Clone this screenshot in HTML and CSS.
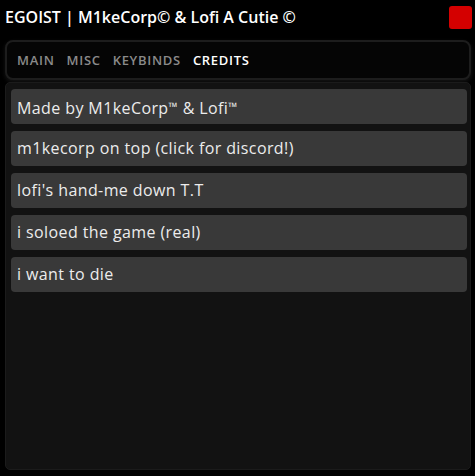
FILE: index.html
```html
<!DOCTYPE html>
<html lang="en">
<head>
    <meta charset="UTF-8">
    <meta name="viewport" content="width=device-width, initial-scale=1.0">
    <title>EGOIST</title>
    <link rel="stylesheet" href="styles.css">
</head>
<body>
    <div class="window">
        <div class="topbar">
            <div class="title">EGOIST | M1keCorp© &amp; Lofi A Cutie ©</div>
            <button class="close-button" aria-label="Close"></button>
        </div>

        <nav class="tabs">
            <span class="tab">MAIN</span>
            <span class="tab">MISC</span>
            <span class="tab">KEYBINDS</span>
            <span class="tab active">CREDITS</span>
        </nav>

        <div class="panel">
            <div class="item">Made by M1keCorp<span class="tm">™</span> &amp; Lofi<span class="tm">™</span></div>
            <div class="item">m1kecorp on top (click for discord!)</div>
            <div class="item">lofi's hand-me down T.T</div>
            <div class="item">i soloed the game (real)</div>
            <div class="item">i want to die</div>
        </div>
    </div>
</body>
</html>
```

FILE: styles.css
```css
body {
    margin: 0;
    background-color: #000;
    color: #fff;
    font-family: 'Open Sans', 'Liberation Sans', sans-serif;
}

.window {
    width: 475px;
    height: 476px;
    display: flex;
    flex-direction: column;
    box-sizing: border-box;
    padding: 0 4px 6px 5px;
}

.topbar {
    height: 34px;
    display: flex;
    align-items: center;
    justify-content: space-between;
}

.title {
    font-size: 16px;
    font-weight: 600;
}

.close-button {
    width: 23px;
    height: 23px;
    margin-right: -1px;
    border: none;
    border-radius: 3px;
    background-color: #d40000;
    padding: 0;
}

.tabs {
    margin-top: 6px;
    height: 36px;
    display: flex;
    align-items: center;
    gap: 12px;
    padding: 0 10px;
    background-color: #050505;
    border: 2px solid #1d1d1d;
    border-radius: 8px;
    box-shadow: 0 2px 4px rgba(60, 60, 60, 0.35);
}

.tab {
    font-size: 13px;
    font-weight: 600;
    color: #8a8a8a;
    letter-spacing: 0.7px;
}

.tab.active {
    color: #fff;
}

.panel {
    flex: 1;
    margin-top: 2px;
    background-color: #121212;
    border: 1px solid #1b1b1b;
    border-radius: 5px;
    padding: 6px 3px 6px 5px;
    display: flex;
    flex-direction: column;
    gap: 7px;
}

.item {
    height: 35px;
    line-height: 35px;
    padding-left: 6px;
    background-color: #393939;
    border-radius: 4px;
    font-size: 16px;
    font-weight: 500;
    color: #ececec;
    letter-spacing: 0.4px;
    white-space: nowrap;
}

.tm {
    font-size: 12px;
    vertical-align: 3px;
}
```
